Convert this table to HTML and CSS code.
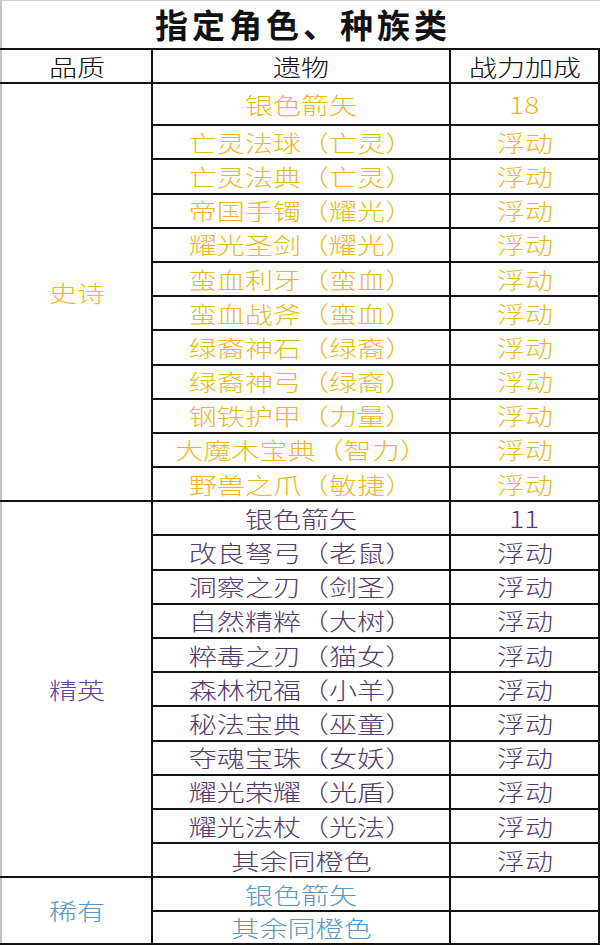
FILE: index.html
```html
<!DOCTYPE html>
<html lang="zh-CN">
<head>
<meta charset="utf-8">
<title>指定角色、种族类</title>
<link rel="stylesheet" href="styles.css">
</head>
<body>
<div class="sheet">
  <div class="title"><span class="tt">指定角色、种族类</span></div>
  <table class="grid">
    <colgroup><col class="c1"><col class="c2"><col class="c3"></colgroup>
    <thead>
      <tr class="head"><th class="q"><span class="t">品质</span></th><th><span class="t">遗物</span></th><th class="r"><span class="t">战力加成</span></th></tr>
    </thead>
    <tbody class="epic">
      <tr class="first"><td class="q" rowspan="12"><span class="t">史诗</span></td><td><span class="t">银色箭矢</span></td><td class="r"><span class="t">18</span></td></tr>
      <tr><td><span class="t">亡灵法球（亡灵）</span></td><td class="r"><span class="t">浮动</span></td></tr>
      <tr><td><span class="t">亡灵法典（亡灵）</span></td><td class="r"><span class="t">浮动</span></td></tr>
      <tr><td><span class="t">帝国手镯（耀光）</span></td><td class="r"><span class="t">浮动</span></td></tr>
      <tr><td><span class="t">耀光圣剑（耀光）</span></td><td class="r"><span class="t">浮动</span></td></tr>
      <tr><td><span class="t">蛮血利牙（蛮血）</span></td><td class="r"><span class="t">浮动</span></td></tr>
      <tr><td><span class="t">蛮血战斧（蛮血）</span></td><td class="r"><span class="t">浮动</span></td></tr>
      <tr><td><span class="t">绿裔神石（绿裔）</span></td><td class="r"><span class="t">浮动</span></td></tr>
      <tr><td><span class="t">绿裔神弓（绿裔）</span></td><td class="r"><span class="t">浮动</span></td></tr>
      <tr><td><span class="t">钢铁护甲（力量）</span></td><td class="r"><span class="t">浮动</span></td></tr>
      <tr><td><span class="t">大魔木宝典（智力）</span></td><td class="r"><span class="t">浮动</span></td></tr>
      <tr><td><span class="t">野兽之爪（敏捷）</span></td><td class="r"><span class="t">浮动</span></td></tr>
    </tbody>
    <tbody class="elite">
      <tr><td class="q" rowspan="11"><span class="t">精英</span></td><td><span class="t">银色箭矢</span></td><td class="r"><span class="t">11</span></td></tr>
      <tr><td><span class="t">改良弩弓（老鼠）</span></td><td class="r"><span class="t">浮动</span></td></tr>
      <tr><td><span class="t">洞察之刃（剑圣）</span></td><td class="r"><span class="t">浮动</span></td></tr>
      <tr><td><span class="t">自然精粹（大树）</span></td><td class="r"><span class="t">浮动</span></td></tr>
      <tr><td><span class="t">粹毒之刃（猫女）</span></td><td class="r"><span class="t">浮动</span></td></tr>
      <tr><td><span class="t">森林祝福（小羊）</span></td><td class="r"><span class="t">浮动</span></td></tr>
      <tr><td><span class="t">秘法宝典（巫童）</span></td><td class="r"><span class="t">浮动</span></td></tr>
      <tr><td><span class="t">夺魂宝珠（女妖）</span></td><td class="r"><span class="t">浮动</span></td></tr>
      <tr><td><span class="t">耀光荣耀（光盾）</span></td><td class="r"><span class="t">浮动</span></td></tr>
      <tr><td><span class="t">耀光法杖（光法）</span></td><td class="r"><span class="t">浮动</span></td></tr>
      <tr><td><span class="t">其余同橙色</span></td><td class="r"><span class="t">浮动</span></td></tr>
    </tbody>
    <tbody class="rare">
      <tr><td class="q" rowspan="2"><span class="t">稀有</span></td><td><span class="t">银色箭矢</span></td><td class="r"></td></tr>
      <tr class="last"><td><span class="t">其余同橙色</span></td><td class="r"></td></tr>
    </tbody>
  </table>
</div>
</body>
</html>
```

FILE: styles.css
```css
html, body {
  margin: 0;
  padding: 0;
  background: #ffffff;
}

body {
  font-family: "Noto Sans CJK SC", "Noto Sans", sans-serif;
  color: #000;
}

.sheet {
  width: 600px;
  height: 945px;
  overflow: hidden;
  border-top: 1px solid #d0d0d0;
  box-sizing: border-box;
}

.title {
  height: 47px;
  box-sizing: border-box;
  border-left: 2px solid #c4c4c4;
  display: flex;
  align-items: center;
  justify-content: center;
}

.tt {
  font-size: 33px;
  font-weight: 700;
  letter-spacing: 4px;
  padding-left: 4px;
  line-height: 1;
  color: #111;
}

.grid {
  border-collapse: collapse;
  table-layout: fixed;
  width: 598px;
}

.c1 { width: 151px; }
.c2 { width: 298px; }
.c3 { width: 149px; }

.grid th,
.grid td {
  border: 2px solid #111;
  padding: 0;
  text-align: center;
  vertical-align: middle;
  font-weight: 300;
  font-size: 23px;
  line-height: 1;
  overflow: hidden;
  white-space: nowrap;
}

.grid .q {
  border-left: 2px solid #c4c4c4;
}

.t {
  display: inline-block;
  transform: scaleX(1.22);
  transform-origin: center;
}

.head { height: 33px; }
.grid tr { height: 34.2px; }
.grid tr.first { height: 42px; }
.rare tr { height: 33.5px; }

.head th { color: #111; }
.epic td { color: #ebb823; }
.elite td { color: #523a6e; }
.rare td { color: #5a97c9; }
.elite td.q { color: #673f94; }
```
